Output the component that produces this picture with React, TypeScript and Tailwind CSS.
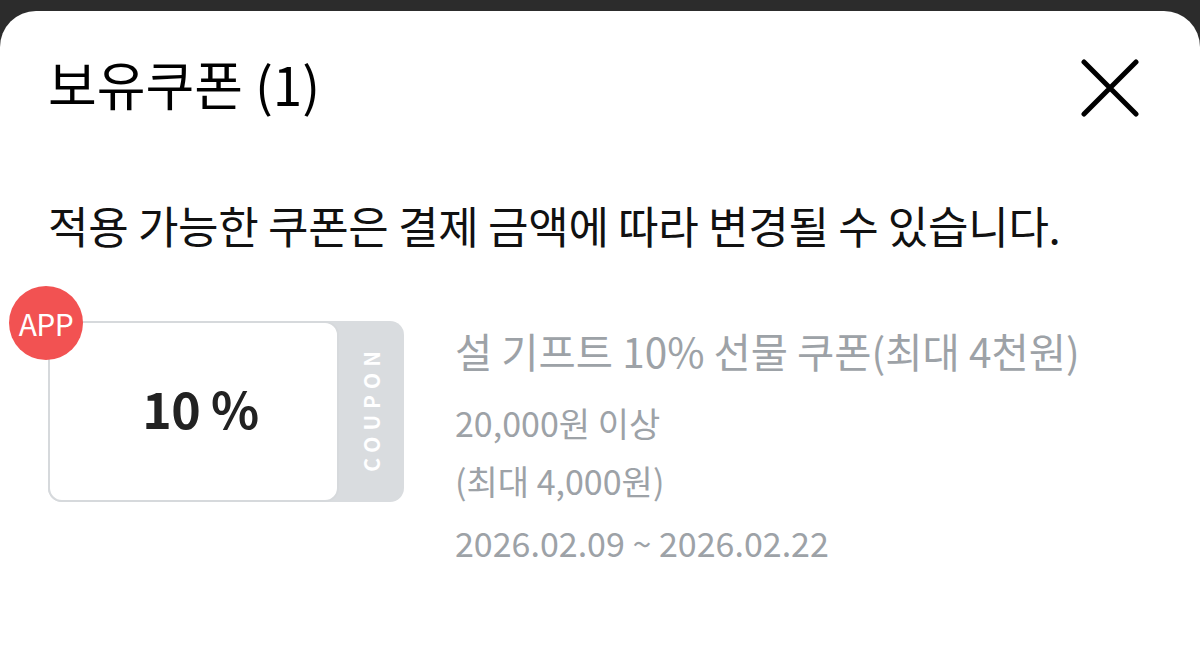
import React from "react";

const font = { fontFamily: '"Noto Sans CJK KR", "Noto Sans", sans-serif' };

export default function App() {
  return (
    <div className="h-[657px] bg-[#2c2c2c] pt-[11px] overflow-hidden" style={font}>
      <div className="h-full bg-white rounded-t-[36px] px-12">
        {/* Header */}
        <div className="flex items-start justify-between pt-[42px]">
          <h1 className="text-[53px] leading-[60px] text-black font-normal">보유쿠폰 (1)</h1>
          <button className="mr-[12px] mt-[5px] w-[60px] h-[60px] flex items-center justify-center">
            <svg width="58" height="58" viewBox="0 0 58 58" fill="none" stroke="#000" strokeWidth="5" strokeLinecap="round">
              <path d="M3 3 L55 55 M55 3 L3 55" />
            </svg>
          </button>
        </div>

        <p className="mt-[81px] text-[44px] leading-[52px] text-[#111] tracking-[-0.3px]">
          적용 가능한 쿠폰은 결제 금액에 따라 변경될 수 있습니다.
        </p>

        {/* Coupon */}
        <div className="mt-[70px] flex items-start">
          <div className="relative w-[356px] h-[181px] shrink-0 rounded-[14px] bg-[#d9dcdf] flex">
            <div className="w-[291px] shrink-0 h-full rounded-[14px] bg-white border-2 border-[#d6d9dc] flex items-center justify-center pl-[14px] pb-[8px]">
              <span className="text-[50px] font-bold text-[#222] tracking-[-0.5px]">10 %</span>
            </div>
            <div className="flex-1 min-w-0 flex items-center justify-center">
              <span className="[writing-mode:vertical-rl] rotate-180 whitespace-nowrap text-[21px] font-bold tracking-[6px] text-white pt-[6px]">COUPON</span>
            </div>
            <div className="absolute -left-[39px] -top-[35px] w-[74px] h-[74px] rounded-full bg-[#f25252] flex items-center justify-center">
              <span className="text-[30px] text-white leading-none tracking-[-0.5px]">APP</span>
            </div>
          </div>

          <div className="ml-[51px] mt-[2px] text-[#9da2a7]">
            <div className="text-[40.5px] leading-[56px]">설 기프트 10% 선물 쿠폰(최대 4천원)</div>
            <div className="mt-[15px] text-[34px] leading-[58px]">20,000원 이상</div>
            <div className="text-[34px] leading-[58px]">(최대 4,000원)</div>
            <div className="mt-[4px] text-[34px] leading-[58px]">2026.02.09 ~ 2026.02.22</div>
          </div>
        </div>
      </div>
    </div>
  );
}
